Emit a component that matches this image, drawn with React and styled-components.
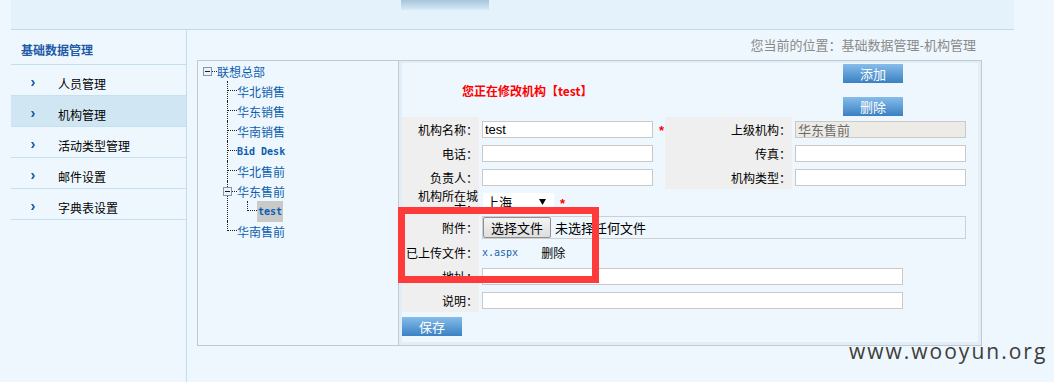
import React from 'react';
import styled, { createGlobalStyle } from 'styled-components';

const GlobalStyle = createGlobalStyle`
  html, body { margin: 0; padding: 0; background: #eef7fd; }
  body {
    font-family: "Noto Sans CJK SC", "Liberation Sans", sans-serif;
    font-size: 12px;
    color: #000;
  }
  * { box-sizing: border-box; }
  ul { list-style: none; margin: 0; padding: 0; }
`;

const Page = styled.div`
  position: relative;
  width: 1054px;
  height: 382px;
  overflow: hidden;
  display: flex;
  flex-direction: column;
`;

const Header = styled.header`
  margin-left: 11px;
  width: 1003px;
  height: 30px;
  flex-shrink: 0;
  background: #e4f3fb;
  border-bottom: 1px solid #bedbea;
`;

const HeaderTab = styled.div`
  margin-left: 390px;
  width: 88px;
  height: 10px;
  background: linear-gradient(#a6c4dc, #d8ebf6);
`;

const Body = styled.div`
  display: flex;
  flex: 1;
  margin-left: 11px;
`;

const Sidebar = styled.aside`
  width: 176px;
  flex-shrink: 0;
  border-right: 1px solid #c0dfee;
`;

const SideTitle = styled.div`
  height: 35px;
  padding: 4px 0 0 10px;
  display: flex;
  align-items: center;
  border-bottom: 1px solid #c3dfee;
  color: #1f5aa8;
  font-weight: bold;
  font-size: 12px;
`;

const MenuItem = styled.div`
  height: 31px;
  padding-top: 6px;
  display: flex;
  align-items: center;
  border-bottom: 1px solid #c5e1ef;
  background: ${p => (p.$active ? '#d0e7f3' : 'transparent')};
`;

const Bullet = styled.span`
  display: inline-flex;
  margin-left: 20px;
  width: 27px;
`;

const MenuText = styled.span`
  font-size: 12px;
  color: #000;
`;

const Content = styled.main`
  flex: 1;
  padding-left: 10px;
`;

const Breadcrumb = styled.div`
  width: 785px;
  height: 30px;
  line-height: 30px;
  text-align: right;
  padding-right: 6px;
  color: #8a8a8a;
  font-size: 13px;
`;

const Box = styled.div`
  width: 785px;
  height: 286px;
  border: 1px solid #c8c8c8;
  display: flex;
`;

const TreePanel = styled.div`
  width: 201px;
  flex-shrink: 0;
  border-right: 1px solid #c8c8c8;
  padding-left: 5px;
`;

const TreeRow = styled.div`
  display: flex;
  align-items: center;
  height: 20px;
`;

const HLine = styled.span`
  width: ${p => p.$w}px;
  height: 1px;
  border-top: 1px dotted #222;
`;

const Children = styled.ul`
  margin-left: ${p => p.$indent}px !important;
`;

const Node = styled.li`
  border-left: ${p => (p.$last ? '1px solid transparent' : '1px dotted #222')};
`;

const Elbow = styled.span`
  align-self: flex-start;
  width: ${p => (p.$last ? 10 : 9)}px;
  height: 10px;
  margin-left: ${p => (p.$last ? -1 : 0)}px;
  border-bottom: 1px dotted #222;
  border-left: ${p => (p.$last ? '1px dotted #222' : 'none')};
`;

const IconSlot = styled.span`
  display: inline-flex;
  margin-left: ${p => p.$offset}px;
  position: relative;
  z-index: 1;
`;

const TreeLabel = styled.span`
  color: #0c5eb0;
  white-space: nowrap;
  font-size: ${p => (p.$mono ? '10px' : '12px')};
  font-family: ${p => (p.$mono ? '"DejaVu Sans Mono", monospace' : 'inherit')};
  font-weight: ${p => (p.$mono ? 'bold' : 'normal')};
  background: ${p => (p.$selected ? '#c9c9c9' : 'transparent')};
  height: ${p => (p.$selected ? '21px' : 'auto')};
  line-height: ${p => (p.$selected ? '21px' : 'normal')};
  padding: ${p => (p.$selected ? '0 1px' : '0')};
`;

const FormFrame = styled.div`
  flex: 1;
  padding: 2px 3px 3px 3px;
  background: #dfeef8;
`;

const FormGrid = styled.div`
  height: 100%;
  background: #eef7fd;
  display: grid;
  grid-template-columns: 77px 186px 127px 186px;
  grid-template-rows: 54px 24px 24px 24px 25px 26px 24px 24px 24px 1fr;
  align-content: start;
`;

const TitleCell = styled.div`
  grid-column: 1 / 4;
  display: flex;
  align-items: center;
  padding-left: 60px;
  color: #ff0000;
  font-weight: bold;
  font-size: 12px;
`;

const ButtonCell = styled.div`
  grid-column: 4 / 5;
  display: flex;
  flex-direction: column;
  gap: 14px;
  padding: 1px 0 0 51px;
`;

const BlueButton = styled.button`
  width: 60px;
  height: 19px;
  padding: 0;
  border: none;
  background: linear-gradient(#86bdea, #3a80c3);
  color: #fff;
  font-family: "Noto Sans CJK SC", sans-serif;
  font-size: 13px;
  line-height: 19px;
  cursor: pointer;
`;

const LabelCell = styled.div`
  background: #efefef;
  display: flex;
  align-items: center;
  justify-content: flex-end;
  text-align: right;
  padding: 0 1px 0 4px;
  font-size: 12px;
  line-height: 13px;
`;

const FieldCell = styled.div`
  grid-column: ${p => p.$col || 'auto'};
  display: flex;
  align-items: center;
  padding-left: 3px;
`;

const TextInput = styled.input`
  width: ${p => p.$w}px;
  height: 17px;
  border: 1px solid #c9c9c9;
  background: ${p => (p.disabled ? '#ecebe5' : '#fff')};
  color: ${p => (p.disabled ? '#6a6a6a' : '#000')};
  font-family: ${p => (p.$cjk ? '"Noto Sans CJK SC", sans-serif' : '"Liberation Sans", sans-serif')};
  font-size: 13px;
  padding: 0 2px;
  outline: none;
`;

const Star = styled.span`
  color: #ff0000;
  margin-left: 6px;
  padding-top: 3px;
  font-family: "Liberation Sans", sans-serif;
  font-size: 13px;
  font-weight: bold;
`;

const SelectBox = styled.div`
  width: 71px;
  height: 17px;
  margin-left: 1px;
  background: #fff;
  display: flex;
  align-items: center;
  justify-content: space-between;
  padding: 0 8px 0 3px;
  font-size: 13px;
`;

const FileBox = styled.div`
  width: 484px;
  height: 23px;
  border: 1px solid #cfcfcf;
  display: flex;
  align-items: center;
  font-size: 13px;
`;

const FileButton = styled.button`
  width: 68px;
  height: 21px;
  padding: 0;
  border: 1px solid #8f8f8f;
  border-radius: 2px;
  background: linear-gradient(#f4f4f4, #dedede);
  font-family: "Noto Sans CJK SC", sans-serif;
  font-size: 13px;
  color: #000;
`;

const FileText = styled.span`
  margin-left: 4px;
`;

const FileLink = styled.a`
  color: #1b5eab;
  font-family: "DejaVu Sans Mono", monospace;
  font-size: 10px;
  text-decoration: none;
`;

const DeleteText = styled.span`
  margin-left: 23px;
  font-size: 12px;
`;

const SaveRow = styled.div`
  grid-column: 1 / 5;
  padding-top: 5px;
`;

const RedFrame = styled.div`
  position: absolute;
  left: 398px;
  top: 207px;
  width: 201px;
  height: 76px;
  border: 7px solid #ff3a3a;
  pointer-events: none;
`;

const Watermark = styled.div`
  position: absolute;
  left: 849px;
  top: 341px;
  font-family: "Open Sans", sans-serif;
  font-size: 21px;
  line-height: 21px;
  letter-spacing: 2px;
  color: #3d3d3d;
`;

const BulletIcon = () => (
  <svg width="4" height="6" viewBox="0 0 4 6">
    <path d="M0 0h2l2 3-2 3H0l2-3z" fill="#1b5ca6" />
  </svg>
);

const MinusIcon = () => (
  <svg width="9" height="9" viewBox="0 0 9 9">
    <rect x="0.5" y="0.5" width="8" height="8" fill="#eef2f6" stroke="#7b98b6" />
    <path d="M2 4.5h5" stroke="#1f1f1f" />
  </svg>
);

const ArrowDown = () => (
  <svg width="7" height="6" viewBox="0 0 7 6">
    <path d="M0 0h7L3.5 6z" fill="#000" />
  </svg>
);

const menu = [
  { text: '人员管理' },
  { text: '机构管理', active: true },
  { text: '活动类型管理' },
  { text: '邮件设置' },
  { text: '字典表设置' },
];

const TreeChild = ({ label, last, mono }) => (
  <Node $last={last}>
    <TreeRow>
      <Elbow $last={last} />
      <TreeLabel $mono={mono}>{label}</TreeLabel>
    </TreeRow>
  </Node>
);

export default function App() {
  return (
    <>
      <GlobalStyle />
      <Page>
        <Header>
          <HeaderTab />
        </Header>
        <Body>
          <Sidebar>
            <SideTitle>基础数据管理</SideTitle>
            {menu.map(m => (
              <MenuItem key={m.text} $active={m.active}>
                <Bullet>
                  <BulletIcon />
                </Bullet>
                <MenuText>{m.text}</MenuText>
              </MenuItem>
            ))}
          </Sidebar>
          <Content>
            <Breadcrumb>您当前的位置：基础数据管理-机构管理</Breadcrumb>
            <Box>
              <TreePanel>
                <TreeRow>
                  <MinusIcon />
                  <HLine $w={5} />
                  <TreeLabel>联想总部</TreeLabel>
                </TreeRow>
                <Children $indent={24}>
                  <TreeChild label="华北销售" />
                  <TreeChild label="华东销售" />
                  <TreeChild label="华南销售" />
                  <TreeChild label="Bid Desk" mono />
                  <TreeChild label="华北售前" />
                  <Node>
                    <TreeRow>
                      <IconSlot $offset={-5}>
                        <MinusIcon />
                      </IconSlot>
                      <HLine $w={5} />
                      <TreeLabel>华东售前</TreeLabel>
                    </TreeRow>
                    <Children $indent={19}>
                      <Node $last>
                        <TreeRow>
                          <Elbow $last />
                          <TreeLabel $mono $selected>test</TreeLabel>
                        </TreeRow>
                      </Node>
                    </Children>
                  </Node>
                  <TreeChild label="华南售前" last />
                </Children>
              </TreePanel>
              <FormFrame>
                <FormGrid>
                  <TitleCell>您正在修改机构【test】</TitleCell>
                  <ButtonCell>
                    <BlueButton>添加</BlueButton>
                    <BlueButton>删除</BlueButton>
                  </ButtonCell>

                  <LabelCell>机构名称：</LabelCell>
                  <FieldCell>
                    <TextInput $w={171} defaultValue="test" />
                    <Star>*</Star>
                  </FieldCell>
                  <LabelCell>上级机构：</LabelCell>
                  <FieldCell>
                    <TextInput $w={171} $cjk disabled defaultValue="华东售前" />
                  </FieldCell>

                  <LabelCell>电话：</LabelCell>
                  <FieldCell>
                    <TextInput $w={171} />
                  </FieldCell>
                  <LabelCell>传真：</LabelCell>
                  <FieldCell>
                    <TextInput $w={171} />
                  </FieldCell>

                  <LabelCell>负责人：</LabelCell>
                  <FieldCell>
                    <TextInput $w={171} />
                  </FieldCell>
                  <LabelCell>机构类型：</LabelCell>
                  <FieldCell>
                    <TextInput $w={171} />
                  </FieldCell>

                  <LabelCell>机构所在城市：</LabelCell>
                  <FieldCell $col="2 / 5">
                    <SelectBox>
                      <span>上海</span>
                      <ArrowDown />
                    </SelectBox>
                    <Star>*</Star>
                  </FieldCell>

                  <LabelCell>附件：</LabelCell>
                  <FieldCell $col="2 / 5">
                    <FileBox>
                      <FileButton>选择文件</FileButton>
                      <FileText>未选择任何文件</FileText>
                    </FileBox>
                  </FieldCell>

                  <LabelCell>已上传文件：</LabelCell>
                  <FieldCell $col="2 / 5">
                    <FileLink href="#">x.aspx</FileLink>
                    <DeleteText>删除</DeleteText>
                  </FieldCell>

                  <LabelCell>地址：</LabelCell>
                  <FieldCell $col="2 / 5">
                    <TextInput $w={421} />
                  </FieldCell>

                  <LabelCell>说明：</LabelCell>
                  <FieldCell $col="2 / 5">
                    <TextInput $w={421} />
                  </FieldCell>

                  <SaveRow>
                    <BlueButton>保存</BlueButton>
                  </SaveRow>
                </FormGrid>
              </FormFrame>
            </Box>
          </Content>
        </Body>
        <RedFrame />
        <Watermark>www.wooyun.org</Watermark>
      </Page>
    </>
  );
}
